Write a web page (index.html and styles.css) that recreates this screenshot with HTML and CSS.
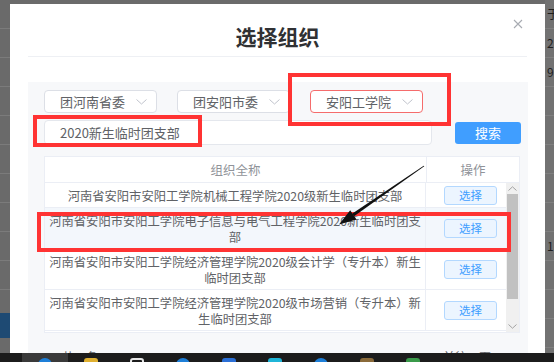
FILE: index.html
```html
<!DOCTYPE html>
<html lang="zh-CN">
<head>
    <meta charset="UTF-8">
    <meta name="viewport" content="width=device-width, initial-scale=1.0">
    <title>选择组织</title>
    <link rel="stylesheet" href="styles.css">
</head>
<body>
    <div class="screen">
        <div class="page-left">
            <div class="ln"></div>
            <div class="ln"></div>
            <div class="ln"></div>
            <div class="ln"></div>
            <div class="ln"></div>
            <div class="ln"></div>
            <div class="ln"></div>
            <div class="ln"></div>
            <div class="ln"></div>
            <div class="ln"></div>
            <div class="band"></div>
        </div>

        <div class="dialog">
            <div class="dialog-header">
                <span class="dialog-title">选择组织</span>
                <span class="dialog-close">
                    <svg width="10" height="10" viewBox="0 0 10 10"><path d="M1 1L9 9M9 1L1 9" stroke="#a8abb2" stroke-width="1.1" fill="none"/></svg>
                </span>
            </div>
            <div class="dialog-body">
                <div class="filter-panel">
                    <div class="select-row">
                        <div class="select">团河南省委<svg width="11" height="6" viewBox="0 0 11 6"><path d="M0.5 0.5L5.5 5L10.5 0.5" stroke="#c0c4cc" fill="none"/></svg></div>
                        <div class="select">团安阳市委<svg width="11" height="6" viewBox="0 0 11 6"><path d="M0.5 0.5L5.5 5L10.5 0.5" stroke="#c0c4cc" fill="none"/></svg></div>
                        <div class="select is-error">安阳工学院<svg width="11" height="6" viewBox="0 0 11 6"><path d="M0.5 0.5L5.5 5L10.5 0.5" stroke="#c0c4cc" fill="none"/></svg></div>
                    </div>
                    <div class="search-row">
                        <div class="search-input">2020新生临时团支部</div>
                        <button class="btn-search">搜索</button>
                    </div>
                    <div class="org-table">
                        <div class="org-head">
                            <div class="head-name">组织全称</div>
                            <div class="head-op">操作</div>
                        </div>
                        <div class="org-body">
                            <div class="org-rows">
                                <div class="org-row">
                                    <div class="cell-name">河南省安阳市安阳工学院机械工程学院2020级新生临时团支部</div>
                                    <div class="cell-op"><button class="btn-pick">选择</button></div>
                                </div>
                                <div class="org-row is-hover">
                                    <div class="cell-name">河南省安阳市安阳工学院电子信息与电气工程学院2020新生临时团支部</div>
                                    <div class="cell-op"><button class="btn-pick">选择</button></div>
                                </div>
                                <div class="org-row">
                                    <div class="cell-name">河南省安阳市安阳工学院经济管理学院2020级会计学（专升本）新生临时团支部</div>
                                    <div class="cell-op"><button class="btn-pick">选择</button></div>
                                </div>
                                <div class="org-row">
                                    <div class="cell-name">河南省安阳市安阳工学院经济管理学院2020级市场营销（专升本）新生临时团支部</div>
                                    <div class="cell-op"><button class="btn-pick">选择</button></div>
                                </div>
                            </div>
                            <div class="fake-scroll">
                                <span class="sc-btn"><svg width="9" height="5" viewBox="0 0 9 5"><path d="M0.5 4.5L4.5 0.8L8.5 4.5" stroke="#a3a3a3" fill="none"/></svg></span>
                                <span class="sc-thumb"></span>
                                <span class="sc-track"></span>
                                <span class="sc-btn"><svg width="9" height="5" viewBox="0 0 9 5"><path d="M0.5 0.5L4.5 4.2L8.5 0.5" stroke="#a3a3a3" fill="none"/></svg></span>
                            </div>
                        </div>
                    </div>
                    <div class="pager">
                        <span class="pager-total">共 9 条</span>
                        <span class="pager-nums"><i>1</i><i>2</i><i>3</i></span>
                        <span class="pager-jump">前往 1 页</span>
                    </div>
                </div>
            </div>
        </div>

        <div class="page-right">
            <div class="cell">于</div>
            <div class="cell">2</div>
            <div class="cell">9</div>
            <div class="cell"></div>
            <div class="cell"></div>
            <div class="cell"></div>
            <div class="cell"></div>
            <div class="cell"></div>
            <div class="cell">1</div>
            <div class="cell"></div>
            <div class="cell"></div>
            <div class="cell"></div>
        </div>

        <div class="mark mark-select"></div>
        <div class="mark mark-input"></div>
        <div class="mark mark-row"></div>
        <svg class="arrow" width="554" height="353" viewBox="0 0 554 353">
            <polygon points="424.3,166.3 423.7,165.7 352.4,213.6 354.0,216.2" fill="#111"/>
            <polygon points="339,224.5 356.5,219.5 350.2,210.3" fill="#111"/>
        </svg>
    </div>
    <div class="taskbar">
        <span class="tb-start"></span>
        <span class="tb-app active"><i class="ic ic-blue"></i></span>
        <span class="tb-app"><i class="ic ic-yellow"></i></span>
        <span class="tb-app"><i class="ic ic-white"></i></span>
        <span class="tb-app"><i class="ic ic-blue"></i></span>
        <span class="tb-app"><i class="ic ic-blue2"></i></span>
        <span class="tb-app"><i class="ic ic-cyan"></i></span>
        <span class="tb-app"><i class="ic ic-blue"></i></span>
        <span class="tb-app"><i class="ic ic-brown"></i></span>
        <span class="tb-app"><i class="ic ic-green"></i></span>
    </div>
</body>
</html>
```

FILE: styles.css
```css
body {
    margin: 0;
    width: 554px;
    height: 362px;
    overflow: hidden;
    display: flex;
    flex-direction: column;
    font-family: "Noto Sans CJK SC", "Liberation Sans", sans-serif;
    background: #6b6b6b;
}

.screen {
    position: relative;
    height: 353px;
    flex-shrink: 0;
    display: flex;
    overflow: hidden;
}

/* dimmed page behind the dialog */
.page-left {
    width: 10px;
    flex-shrink: 0;
    background: #6a6a6a;
    display: flex;
    flex-direction: column;
}

.page-left .ln {
    height: 28px;
    flex-shrink: 0;
    border-bottom: 1px solid #7b7b7b;
}

.page-left .band {
    margin-top: 23px;
    height: 25px;
    flex-shrink: 0;
    background: #1e4a73;
}

.page-right {
    flex: 1;
    background: #727272;
    display: flex;
    flex-direction: column;
    overflow: hidden;
}

.page-right .cell {
    height: 28px;
    flex-shrink: 0;
    border-bottom: 1px solid #808080;
    padding-left: 2px;
    font-size: 12px;
    line-height: 28px;
    color: #1f1f1f;
    white-space: nowrap;
}

/* dialog */
.dialog {
    width: 535px;
    flex-shrink: 0;
    margin-top: 4px;
    background: #fff;
    display: flex;
    flex-direction: column;
    overflow: hidden;
}

.dialog-header {
    position: relative;
    flex-shrink: 0;
    margin: 0 18px;
    height: 52px;
    border-bottom: 1px solid #eef0f4;
    text-align: center;
}

.dialog-title {
    display: block;
    padding-top: 21px;
    font-size: 21px;
    line-height: 22px;
    font-weight: bold;
    color: #303133;
}

.dialog-close {
    position: absolute;
    top: 15px;
    right: 4px;
    display: flex;
}

.dialog-body {
    flex: 1;
    min-height: 0;
    display: flex;
    padding: 25px 18px 0;
}

.filter-panel {
    flex: 1;
    background: #f7f8fa;
    padding: 8px 7px 0 16px;
}

.select-row {
    display: flex;
    gap: 20px;
}

.select {
    box-sizing: border-box;
    width: 113px;
    height: 23px;
    padding: 0 9px 0 15px;
    display: flex;
    align-items: center;
    justify-content: space-between;
    background: #fff;
    border: 1px solid #dcdfe6;
    border-radius: 4px;
    font-size: 13px;
    color: #606266;
}

.select.is-error {
    border-color: #f56c6c;
}

.search-row {
    margin-top: 7px;
    display: flex;
    align-items: center;
    gap: 23px;
}

.search-input {
    box-sizing: border-box;
    width: 388px;
    height: 25px;
    padding-left: 15px;
    display: flex;
    align-items: center;
    background: #fff;
    border: 1px solid #e4e7ed;
    border-radius: 4px;
    font-size: 13px;
    color: #606266;
}

.btn-search {
    width: 66px;
    height: 22px;
    border: none;
    border-radius: 3px;
    background: #409eff;
    color: #fff;
    font-family: inherit;
    font-size: 13px;
    padding: 0;
}

/* table */
.org-table {
    margin-top: 11px;
    width: 476px;
    box-sizing: border-box;
    border: 1px solid #ebeef5;
    background: #fff;
}

.org-head {
    display: flex;
    height: 25px;
    border-bottom: 1px solid #ebeef5;
    font-size: 12.5px;
    line-height: 25px;
    color: #909399;
    text-align: center;
}

.head-name {
    width: 381px;
    border-right: 1px solid #ebeef5;
}

.head-op {
    flex: 1;
}

.org-body {
    display: flex;
    height: 149px;
    overflow: hidden;
}

.org-rows {
    flex: 1;
}

.org-row {
    display: flex;
    border-bottom: 1px solid #ebeef5;
}

.org-row.is-hover {
    background: #f3f7fc;
}

.cell-name {
    box-sizing: border-box;
    width: 381px;
    padding: 5px 3px 3px;
    border-right: 1px solid #ebeef5;
    font-size: 12.3px;
    line-height: 16px;
    color: #606266;
    text-align: center;
}

.cell-op {
    flex: 1;
    display: flex;
    align-items: center;
    padding-left: 18px;
}

.btn-pick {
    width: 53px;
    height: 19px;
    padding: 0;
    border: 1px solid #b3d8ff;
    border-radius: 3px;
    background: #ecf5ff;
    color: #409eff;
    font-family: inherit;
    font-size: 11.5px;
}

.fake-scroll {
    width: 13px;
    display: flex;
    flex-direction: column;
    background: #f0f0f0;
}

.sc-btn {
    height: 11px;
    display: flex;
    align-items: center;
    justify-content: center;
}

.sc-thumb {
    height: 105px;
    margin: 0 1px;
    background: #c1c1c1;
}

.sc-track {
    flex: 1;
}

.pager {
    margin-top: 16px;
    display: flex;
    align-items: center;
    font-size: 12px;
    line-height: 16px;
    color: #606266;
    padding-left: 18px;
}

.pager-nums {
    margin-left: 44px;
    display: flex;
    gap: 10px;
}

.pager-nums i {
    font-style: normal;
    color: #409eff;
}

.pager-jump {
    margin-left: auto;
    margin-right: 30px;
}

/* annotations */
.mark {
    position: absolute;
    box-sizing: border-box;
    border: 4px solid #ff3333;
    pointer-events: none;
}

.mark-select {
    left: 288px;
    top: 73px;
    width: 163px;
    height: 53px;
}

.mark-input {
    left: 33px;
    top: 115px;
    width: 169px;
    height: 32px;
}

.mark-row {
    left: 37px;
    top: 212px;
    width: 474px;
    height: 40px;
}

.arrow {
    position: absolute;
    left: 0;
    top: 0;
    pointer-events: none;
}

/* taskbar */
.taskbar {
    height: 9px;
    flex-shrink: 0;
    display: flex;
    background: #1c1c1c;
    overflow: hidden;
}

.tb-start {
    width: 22px;
}

.tb-app {
    width: 46px;
    display: flex;
    justify-content: center;
    padding-top: 5px;
}

.tb-app.active {
    background: #3a3a3a;
}

.ic {
    width: 14px;
    height: 14px;
    border-radius: 3px;
}

.ic-blue { background: #1e7fd8; border-radius: 7px; }
.ic-blue2 { background: #2b6fd6; }
.ic-yellow { background: #e0b030; }
.ic-white { background: transparent; border: 2px solid #e6e6e6; box-sizing: border-box; }
.ic-cyan { background: #1fb5d8; }
.ic-brown { background: #8a6a3a; }
.ic-green { background: #3a9a4a; }
```
